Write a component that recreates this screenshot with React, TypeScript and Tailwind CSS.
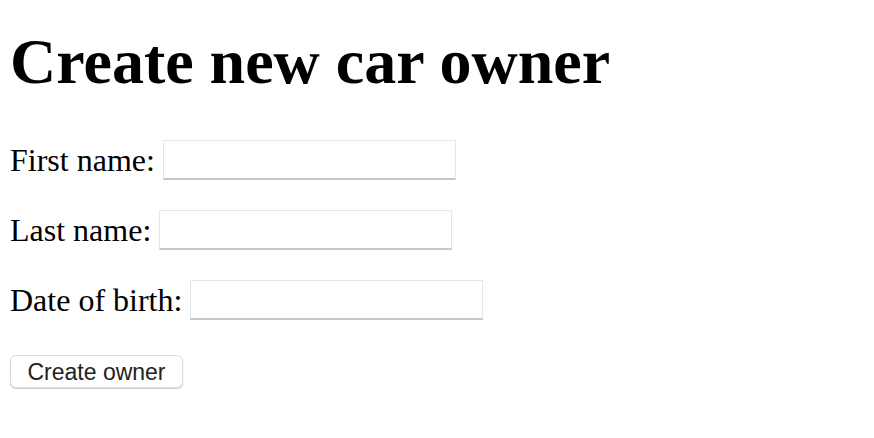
export default function App() {
  const fields = [
    { label: 'First name:', id: 'firstName' },
    { label: 'Last name:', id: 'lastName' },
    { label: 'Date of birth:', id: 'dateOfBirth' },
  ]

  return (
    <div className="min-h-[438px] bg-white pl-[10px] text-black font-['Liberation_Serif',serif]">
      <h1 className="pt-[26px] text-[64px] font-bold leading-[72px]">Create new car owner</h1>
      <form className="mt-[42px] flex flex-col gap-[30px]">
        {fields.map((field) => (
          <div key={field.id} className="flex h-[40px] items-center gap-[8px]">
            <label htmlFor={field.id} className="text-[32px] leading-[40px]">
              {field.label}
            </label>
            <input
              id={field.id}
              type="text"
              className="h-[40px] w-[293px] border border-[#e6e6e6] border-b-[2px] border-b-[#c6c6c6] bg-white outline-none"
            />
          </div>
        ))}
        <div className="mt-[5px]">
          <button
            type="button"
            className="h-[33px] w-[173px] rounded-[6px] border border-[#dcdcdc] bg-white pt-[2px] font-['Liberation_Sans',sans-serif] text-[23px] leading-none text-[#222] shadow-[0_1px_1px_rgba(0,0,0,0.2)]"
          >
            Create owner
          </button>
        </div>
      </form>
    </div>
  )
}
